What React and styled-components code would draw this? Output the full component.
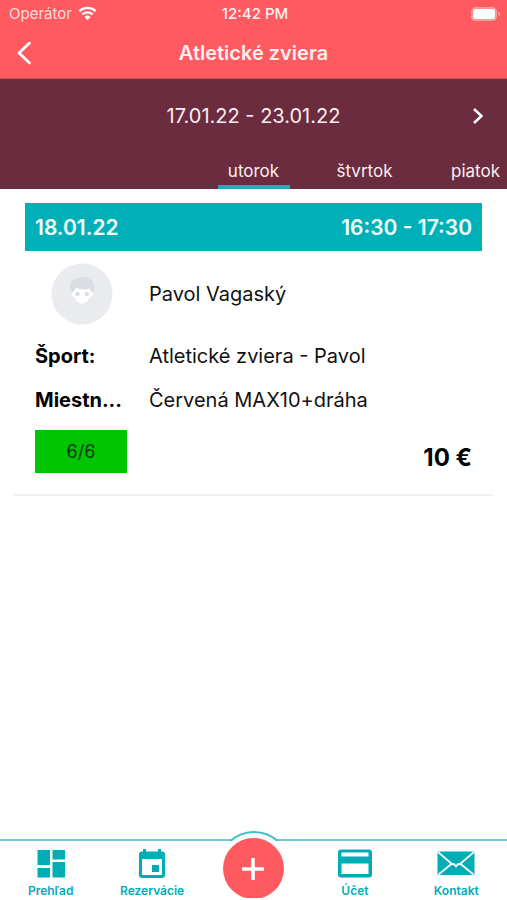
import React, { useState } from 'react';
import styled, { createGlobalStyle } from 'styled-components';

const GlobalStyle = createGlobalStyle`
  * {
    box-sizing: border-box;
  }
  body {
    margin: 0;
    background: #fff;
    color: #111;
    font-family: Inter, "Liberation Sans", sans-serif;
  }
  button {
    margin: 0;
    padding: 0;
    border: none;
    background: none;
    color: inherit;
    font: inherit;
    cursor: pointer;
  }
`;

const Screen = styled.div`
  min-height: 100vh;
  display: flex;
  flex-direction: column;
`;

const Header = styled.header`
  background: #ff5a5f;
  color: #fff;
  border-bottom: 1px solid #d64f58;
`;

const StatusBar = styled.div`
  height: 27px;
  padding: 0 6px 0 9px;
  display: grid;
  grid-template-columns: 1fr auto 1fr;
  align-items: center;
  font-size: 15px;
`;

const Carrier = styled.div`
  display: flex;
  align-items: center;
  gap: 6px;
  color: #ffdcdd;
`;

const Clock = styled.div`
  font-weight: 500;
  color: #fff0f0;
`;

const Battery = styled.svg`
  justify-self: end;
  display: block;
`;

const TitleBar = styled.div`
  height: 51px;
  padding: 0 16px;
  display: grid;
  grid-template-columns: 1fr auto 1fr;
  align-items: center;
`;

const Title = styled.h1`
  margin: 0;
  font-size: 20px;
  font-weight: 600;
  color: #fff0f0;
`;

const IconButton = styled.button`
  display: flex;
  justify-self: ${props => props.$end ? 'end' : 'start'};
`;

const Week = styled.section`
  background: #6a2c3e;
  color: #fbeef1;
`;

const WeekRange = styled.div`
  height: 74px;
  padding: 0 22px;
  display: grid;
  grid-template-columns: 1fr auto 1fr;
  align-items: center;
  font-size: 20px;
`;

const RangeText = styled.div`
  grid-column: 2;
`;

const Tabs = styled.div`
  padding-left: calc(50% - 36px);
  display: flex;
  gap: 39px;
  overflow: hidden;
`;

const Tab = styled.button`
  flex: 0 0 72px;
  height: 36px;
  padding-top: 4px;
  font-size: 17px;
  line-height: 28px;
  text-align: center;
  border-bottom: 4px solid ${props => props.$active ? '#1eafb9' : 'transparent'};
`;

const Main = styled.main`
  flex: 1;
  padding: 14px 14px;
`;

const Lesson = styled.article`
  padding: 0 11px 21px;
  border-bottom: 2px solid #f0f0f0;
`;

const LessonTime = styled.div`
  height: 48px;
  padding: 0 10px;
  display: flex;
  justify-content: space-between;
  align-items: center;
  background: #00b0b9;
  color: #f2ffff;
  font-size: 21px;
  font-weight: 600;
`;

const Person = styled.div`
  padding: 12px 10px 9px;
  display: grid;
  grid-template-columns: 94px 1fr;
  column-gap: 20px;
  align-items: center;
  font-size: 20px;
`;

const Avatar = styled.svg`
  display: block;
  justify-self: center;
`;

const Details = styled.dl`
  margin: 0;
  padding: 0 10px;
  display: grid;
  grid-template-columns: 94px 1fr;
  column-gap: 20px;
  font-size: 20px;
  line-height: 44px;
`;

const Label = styled.dt`
  font-weight: 700;
  color: #000;
  white-space: nowrap;
`;

const Value = styled.dd`
  margin: 0;
`;

const LessonFooter = styled.div`
  padding: 8px 10px 0;
  display: flex;
  justify-content: space-between;
  align-items: flex-end;
`;

const Capacity = styled.div`
  width: 92px;
  height: 43px;
  background: #00c400;
  color: #063a06;
  font-size: 18px;
  line-height: 43px;
  text-align: center;
`;

const Price = styled.div`
  color: #000;
  font-size: 24px;
  font-weight: 700;
  line-height: 30px;
`;

const BottomNav = styled.nav`
  position: relative;
  height: 61px;
  display: grid;
  grid-template-columns: repeat(5, 1fr);
  border-top: 2px solid #6fcfd4;
  background: #fff;
`;

const NavItem = styled.button`
  display: flex;
  flex-direction: column;
  align-items: center;
  padding-top: 6px;
  color: #00adb7;
  font-size: 12px;
  font-weight: 600;
  line-height: 20px;

  svg {
    display: block;
    height: 34px;
  }
`;

// the add button sticks out over the top edge of the nav
const AddArea = styled.div`
  position: absolute;
  left: 0;
  right: 0;
  bottom: 2px;
  height: 67px;
  overflow: hidden;
  display: flex;
  justify-content: center;
  pointer-events: none;
`;

const AddRing = styled.div`
  flex: none;
  width: 72px;
  height: 72px;
  border: 2px solid #45bcc4;
  border-radius: 50%;
  background: #f5fafc;
  clip-path: inset(0 0 62px 0);
`;

const AddButton = styled.button`
  position: absolute;
  top: 7px;
  left: calc(50% - 31px);
  width: 61px;
  height: 61px;
  display: flex;
  justify-content: center;
  align-items: center;
  border-radius: 50%;
  background: #ff5a5f;
  pointer-events: auto;
`;

const WifiIcon = () => (
  <svg width="19" height="15" viewBox="0 0 19 15" aria-hidden="true">
    <path d="M1.3 5.1a11.8 11.8 0 0 1 16.4 0" fill="none" stroke="#fff" strokeWidth="2.2" />
    <path d="M4.3 8.4a7.5 7.5 0 0 1 10.4 0" fill="none" stroke="#fff" strokeWidth="2.2" />
    <path d="M9.5 14.2l-3-3.3a4.4 4.4 0 0 1 6 0z" fill="#fff" />
  </svg>
);

const BatteryIcon = () => (
  <Battery width="30" height="14" viewBox="0 0 30 14" aria-hidden="true">
    <rect x="0.5" y="0.5" width="25" height="13" rx="4" fill="#ff8f92" stroke="#ff9fa2" />
    <rect x="2" y="2" width="22" height="10" rx="2.5" fill="#fff" />
    <path d="M27.5 4.5c1.8.8 1.8 4.2 0 5z" fill="#ffa6a9" />
  </Battery>
);

const BackIcon = () => (
  <svg width="16" height="24" viewBox="0 0 16 24" aria-hidden="true">
    <path d="M13.5 2L3 12l10.5 10" fill="none" stroke="#fff" strokeWidth="2.8" strokeLinecap="round" strokeLinejoin="round" />
  </svg>
);

const NextIcon = () => (
  <svg width="14" height="18" viewBox="0 0 14 18" aria-hidden="true">
    <path d="M3 2l7.5 7L3 16" fill="none" stroke="#fff" strokeWidth="2.5" />
  </svg>
);

const AvatarIcon = () => (
  <Avatar width="62" height="62" viewBox="0 0 62 62" role="img" aria-label="Pavol Vagaský">
    <circle cx="31" cy="31" r="30.5" fill="#e9ebee" />
    <path d="M20.5 29.500c-3.500-7-1-13 6-14.500 5-2 9-1.500 11.500 1 5.500 2 7 7 4 13.500z" fill="#dadde1" />
    <path d="M20.500 30.500c.2-1.300 1.500-1.500 2.500-2 .8-1.500 1-3 2.800-4.300 1.200 1.800 3.500 2.300 5.200 1.500 2.500 1.500 5 1 6.800-.5 1 1 1.200 2.300 2 3.300 1 .5 2.200.8 2.200 2 0 1.800-1.300 3-3 3.800-1.800 3.700-5 6.400-8 6.400s-6.200-2.700-7.800-6.400c-1.600-.8-2.700-2-2.700-3.800z" fill="#fff" />
    <circle cx="26.500" cy="31" r="2.200" fill="#dadde1" />
    <circle cx="35.800" cy="31" r="2.200" fill="#dadde1" />
  </Avatar>
);

const DashboardIcon = () => (
  <svg width="28" viewBox="0 0 28 34" fill="currentColor" aria-hidden="true">
    <path d="M0.500 3h12.500v15H0.500zM15.500 3H28v9.500H15.500zM0.500 21h12.500v9.500H0.500zM15.500 15H28v15.500H15.500z" />
  </svg>
);

const CalendarIcon = () => (
  <svg width="26" viewBox="0 0 26 34" aria-hidden="true">
    <path fill="currentColor" fillRule="evenodd" d="M4 2h3v2.500h12V2h3v2.500h1A3 3 0 0 1 26 7.500V28a3 3 0 0 1-3 3H3a3 3 0 0 1-3-3V7.500a3 3 0 0 1 3-3h1zM3 12v16h20V12z" />
    <path fill="currentColor" d="M13 18h7v7h-7z" />
  </svg>
);

const CardIcon = () => (
  <svg width="34" viewBox="0 0 34 34" aria-hidden="true">
    <path fill="currentColor" fillRule="evenodd" d="M3 2.500h28a3 3 0 0 1 3 3v22a3 3 0 0 1-3 3H3a3 3 0 0 1-3-3v-22a3 3 0 0 1 3-3zM3.500 5.500v4h27v-4zM3.500 16.500v10.500h27v-10.500z" />
  </svg>
);

const MailIcon = () => (
  <svg width="38" viewBox="0 0 38 34" aria-hidden="true">
    <rect x="0.500" y="4.500" width="37" height="23.500" rx="1" fill="currentColor" />
    <path d="M1 5l14.500 12.500 1.500-.5 2 2.500 2-2.500 1.500.5L37 5M1.500 27.500l13.500-11M36.500 27.500L23 16.500" fill="none" stroke="#fff" strokeWidth="1.700" />
  </svg>
);

const PlusIcon = () => (
  <svg width="22" height="22" viewBox="0 0 22 22" aria-hidden="true">
    <path d="M11 0v22M0 11h22" stroke="#fff" strokeWidth="3.600" />
  </svg>
);

const days = ['utorok', 'štvrtok', 'piatok'];

const App = () => {
  const [day, setDay] = useState('utorok');

  return (
    <Screen>
      <GlobalStyle />
      <Header>
        <StatusBar>
          <Carrier>Operátor <WifiIcon /></Carrier>
          <Clock>12:42 PM</Clock>
          <BatteryIcon />
        </StatusBar>
        <TitleBar>
          <IconButton aria-label="Späť"><BackIcon /></IconButton>
          <Title>Atletické zviera</Title>
        </TitleBar>
      </Header>
      <Week>
        <WeekRange>
          <RangeText>17.01.22 - 23.01.22</RangeText>
          <IconButton $end aria-label="Ďalší týždeň"><NextIcon /></IconButton>
        </WeekRange>
        <Tabs role="tablist">
          {days.map(name => (
            <Tab
              key={name}
              role="tab"
              aria-selected={day === name}
              $active={day === name}
              onClick={() => setDay(name)}>
              {name}
            </Tab>
          ))}
        </Tabs>
      </Week>
      <Main>
        <Lesson>
          <LessonTime>
            <span>18.01.22</span>
            <span>16:30 - 17:30</span>
          </LessonTime>
          <Person>
            <AvatarIcon />
            <span>Pavol Vagaský</span>
          </Person>
          <Details>
            <Label>Šport:</Label>
            <Value>Atletické zviera - Pavol</Value>
            <Label>Miestn...</Label>
            <Value>Červená MAX10+dráha</Value>
          </Details>
          <LessonFooter>
            <Capacity>6/6</Capacity>
            <Price>10 €</Price>
          </LessonFooter>
        </Lesson>
      </Main>
      <BottomNav>
        <NavItem><DashboardIcon />Prehľad</NavItem>
        <NavItem><CalendarIcon />Rezervácie</NavItem>
        <span />
        <NavItem><CardIcon />Účet</NavItem>
        <NavItem><MailIcon />Kontakt</NavItem>
        <AddArea>
          <AddRing />
          <AddButton aria-label="Pridať"><PlusIcon /></AddButton>
        </AddArea>
      </BottomNav>
    </Screen>
  );
}

export default App;
